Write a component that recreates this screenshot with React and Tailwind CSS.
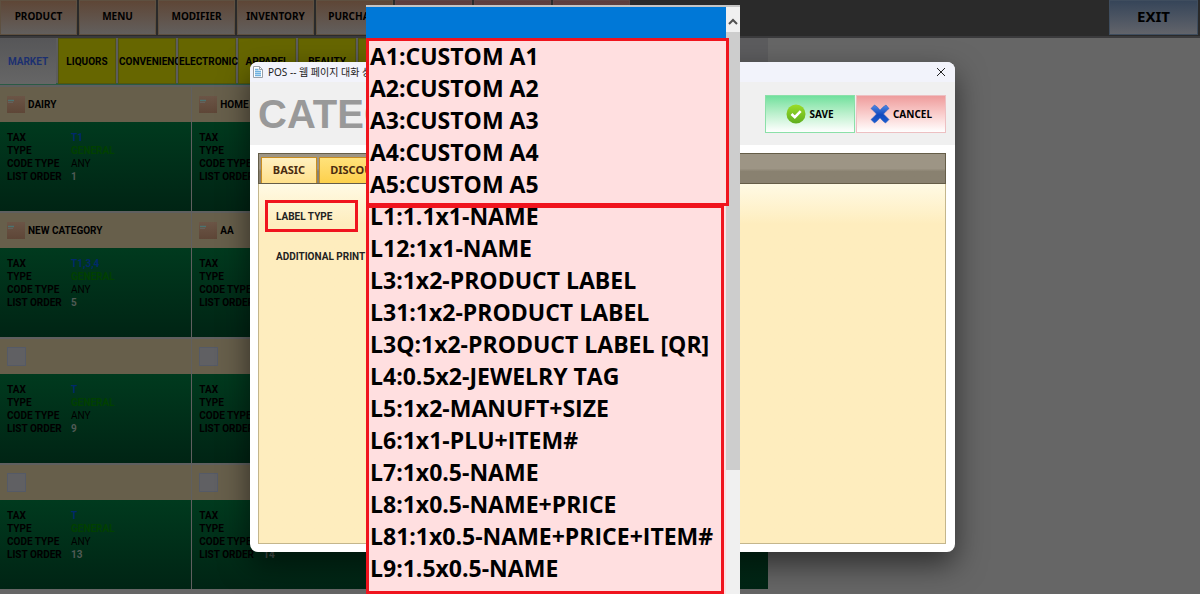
import { useState } from "react";

const MENUS = ["PRODUCT", "MENU", "MODIFIER", "INVENTORY", "PURCHASE"];
const REPORT_MENUS = ["", "", ""];
const TABS = ["LIQUORS", "CONVENIENC", "ELECTRONIC", "APPAREL", "BEAUTY", ""];

const CATEGORIES = [
  { name: "DAIRY", tax: "T1", order: 1 },
  { name: "HOME", tax: "T1", order: 2 },
  { name: "", tax: "T", order: 3 },
  { name: "", tax: "T", order: 4 },
  { name: "NEW CATEGORY", tax: "T1,3,4", order: 5 },
  { name: "AA", tax: "T1", order: 6 },
  { name: "", tax: "T", order: 7 },
  { name: "", tax: "T", order: 8 },
  { name: "", tax: "T", order: 9 },
  { name: "", tax: "T", order: 10 },
  { name: "", tax: "T", order: 11 },
  { name: "", tax: "T", order: 12 },
  { name: "", tax: "T", order: 13 },
  { name: "", tax: "T", order: 14 },
  { name: "", tax: "T", order: 15 },
  { name: "", tax: "T", order: 16 },
];

const CUSTOM_LABELS = [
  "A1:CUSTOM A1",
  "A2:CUSTOM A2",
  "A3:CUSTOM A3",
  "A4:CUSTOM A4",
  "A5:CUSTOM A5",
];

const STOCK_LABELS = [
  "L1:1.1x1-NAME",
  "L12:1x1-NAME",
  "L3:1x2-PRODUCT LABEL",
  "L31:1x2-PRODUCT LABEL",
  "L3Q:1x2-PRODUCT LABEL [QR]",
  "L4:0.5x2-JEWELRY TAG",
  "L5:1x2-MANUFT+SIZE",
  "L6:1x1-PLU+ITEM#",
  "L7:1x0.5-NAME",
  "L8:1x0.5-NAME+PRICE",
  "L81:1x0.5-NAME+PRICE+ITEM#",
  "L9:1.5x0.5-NAME",
];

function TopBar() {
  return (
    <header className="flex h-[38px] justify-between border-b-2 border-[#3a3a3c] bg-[#2a2a2a] font-['Noto_Sans',sans-serif] font-bold text-black">
      <nav className="flex gap-[2px]">
        {MENUS.map((m) => (
          <button
            key={m}
            className="h-[35px] w-[77px] border border-[#5e5040] bg-linear-to-b from-[#5e4636] to-[#625f5d] pb-[2px] text-[10px]"
          >
            {m}
          </button>
        ))}
        {REPORT_MENUS.map((m, i) => (
          <button
            key={i}
            aria-label="Report"
            className="h-[35px] w-[77px] border border-[#5e4545] bg-linear-to-b from-[#5e3c3c] to-[#625d5d]"
          >
            {m}
          </button>
        ))}
      </nav>
      <button className="mr-[2px] h-[35px] w-[89px] border border-[#3f4d5e] bg-linear-to-b from-[#364559] to-[#62646a] pb-[2px] text-[15px]">
        EXIT
      </button>
    </header>
  );
}

function CategoryTabs() {
  return (
    <nav className="flex h-[47px] gap-[2px] border-b-2 border-[#2b5a45] bg-[#5c5c5e] text-[10px] font-bold">
      <button className="h-[46px] w-14 bg-linear-to-b from-[#565658] to-[#666] text-[#1c3070]">
        MARKET
      </button>
      {TABS.map((t, i) => (
        <button
          key={i}
          aria-label={t || "More"}
          className="h-[46px] w-[58px] border border-[#54560c] bg-[#666600] text-black"
        >
          {t}
        </button>
      ))}
    </nav>
  );
}

function BoxIcon() {
  return (
    <svg width="18" height="17" viewBox="0 0 18 17">
      <defs>
        <linearGradient id="box" x1="0" y1="0" x2="0" y2="1">
          <stop offset="0" stopColor="#6b5546" />
          <stop offset="1" stopColor="#5e4637" />
        </linearGradient>
      </defs>
      <rect width="18" height="17" fill="url(#box)" />
      <path d="M1 4.500h6" stroke="#4c7370" strokeWidth="1.500" />
      <path d="M1 6.500h5" stroke="#66605a" />
    </svg>
  );
}

function CategoryCard({ category }) {
  return (
    <article>
      <div className="flex h-[35px] items-center gap-[3px] bg-[#675f4b] pl-[7px] text-[10px] font-bold text-black">
        {category.name ? (
          <BoxIcon />
        ) : (
          <span className="size-[19px] border border-[#555a66] bg-[#606063]" />
        )}
        {category.name}
      </div>
      <dl className="grid h-[89px] auto-rows-[13px] grid-cols-[64px_1fr] bg-linear-to-b from-[#003a1e] to-[#002414] pt-[9px] pl-[7px] text-[10px] leading-[13px] whitespace-nowrap text-black">
        <dt className="font-bold">TAX</dt>
        <dd className="font-bold text-[#00296b]">{category.tax}</dd>
        <dt className="font-bold">TYPE</dt>
        <dd className="font-bold text-[#004000]">GENERAL</dd>
        <dt className="font-bold">CODE TYPE</dt>
        <dd>ANY</dd>
        <dt className="font-bold">LIST ORDER</dt>
        <dd className="font-bold text-[#505a55]">{category.order}</dd>
      </dl>
    </article>
  );
}

function DocIcon() {
  return (
    <svg width="10" height="12" viewBox="0 0 10 12">
      <path d="M.5.5h6l3 3v8h-9z" fill="#fff" stroke="#9aa0a8" />
      <path d="M6.500.5v3h3" fill="none" stroke="#9aa0a8" />
      <path d="M2 3.500h3.500M2 5.500h6M2 7.500h6M2 9.500h6" stroke="#6fb1e0" strokeWidth="1.300" />
    </svg>
  );
}

function CheckIcon() {
  return (
    <svg width="20" height="20" viewBox="0 0 20 20">
      <defs>
        <linearGradient id="ok" x1="0" y1="0" x2="0" y2="1">
          <stop offset="0" stopColor="#9bdc28" />
          <stop offset="1" stopColor="#5fae1e" />
        </linearGradient>
      </defs>
      <circle cx="10" cy="10" r="9.500" fill="url(#ok)" />
      <path d="M5.500 10l3.300 3.200 5.900-6" fill="none" stroke="#fff" strokeWidth="2.600" />
    </svg>
  );
}

function CrossIcon() {
  return (
    <svg width="20" height="20" viewBox="0 0 20 20">
      <defs>
        <linearGradient id="no" x1="0" y1="0" x2="0" y2="1">
          <stop offset="0" stopColor="#4f8ae6" />
          <stop offset=".55" stopColor="#1248bd" />
          <stop offset="1" stopColor="#1c5ed0" />
        </linearGradient>
      </defs>
      <path
        d="M1 4.500L4.500 1Q8 3 10 6.200 12.500 3 16 1L19 4.500Q16 7 13.500 10 16.500 13 19 15.500L15.500 19Q12.500 17 10 13.800 7.500 17 4.500 19L1 15.500Q4 13 6.500 10 4 7 1 4.500z"
        fill="url(#no)"
        stroke="#2a5fc4"
        strokeWidth=".6"
      />
    </svg>
  );
}

function LabelTypeList({ value, onChange }) {
  return (
    <div className="absolute top-[5px] left-[366px] flex w-[374px] border-t-2 border-[#c4c4c4] bg-[#ffdfe0]">
      <select
        id="label-type"
        size={18}
        value={value}
        onChange={(e) => onChange(e.target.value)}
        className="h-[587px] flex-1 appearance-none overflow-hidden bg-[#ffdfe0] font-['Open_Sans',sans-serif] text-[23px] text-black outline-none"
      >
        <option value="none" className="block h-[33px] bg-[#0078d7] p-0" />
        {[...CUSTOM_LABELS, ...STOCK_LABELS].map((l) => (
          <option key={l} value={l} className="block h-8 min-h-8 py-0 pr-0 pl-1 leading-8 font-bold">
            {l}
          </option>
        ))}
      </select>
      <div className="flex w-[14px] flex-col bg-[#f0f0f0]">
        <button aria-label="Scroll up" className="flex h-[25px] items-center justify-center pt-1">
          <svg width="10" height="7" viewBox="0 0 10 7">
            <path d="M1 6l4-4 4 4" fill="none" stroke="#505050" strokeWidth="2" />
          </svg>
        </button>
        <div className="h-[438px] bg-[#cdcdcd]" />
      </div>
      {/* group outlines */}
      <div className="pointer-events-none absolute top-[31px] left-0 h-[168px] w-[363px] border-3 border-[#f0141e]" />
      <div className="pointer-events-none absolute top-[198px] left-0 h-[389px] w-[358px] border-3 border-[#f0141e]" />
    </div>
  );
}

function CategoryDialog() {
  return (
    <div
      role="dialog"
      aria-label="Category"
      className="absolute top-[62px] left-[250px] flex h-[490px] w-[705px] flex-col overflow-hidden rounded-lg bg-white shadow-[0_12px_30px_rgba(0,0,0,0.55)]"
    >
      <div className="flex h-5 items-center justify-between bg-[#f2f3fb] pr-[9px] pl-[3px]">
        <div className="flex items-center gap-[5px] font-['Noto_Sans','Noto_Sans_CJK_KR',sans-serif] text-[10px] text-[#222]">
          <DocIcon />
          POS -- 웹 페이지 대화 상자
        </div>
        <button aria-label="Close">
          <svg width="10" height="10" viewBox="0 0 10 10">
            <path d="M1 1l8 8M9 1l-8 8" stroke="#222" />
          </svg>
        </button>
      </div>
      <div className="flex h-[63px] items-center justify-between bg-[#f0f0f0] pt-px pr-[9px] pl-2">
        <h1 className="font-['Liberation_Sans',sans-serif] text-[40px] leading-none font-bold text-[#999]">CATEGORY</h1>
        <div className="flex gap-px font-['Noto_Sans',sans-serif] text-[10px] font-bold text-black">
          <button className="flex h-[38px] w-[90px] items-center justify-center gap-[3px] border border-[#8be0a8] bg-linear-to-b from-[#6fe09d] to-white">
            <CheckIcon />
            SAVE
          </button>
          <button className="flex h-[38px] w-[90px] items-center justify-center gap-[3px] border border-[#edc0c2] bg-linear-to-b from-[#ee9c9c] to-white">
            <CrossIcon />
            CANCEL
          </button>
        </div>
      </div>
      <div className="m-2 mr-[9px] flex flex-1 flex-col">
        <div
          role="tablist"
          className="flex h-[31px] items-end gap-[2px] border border-[#655d48] bg-linear-to-b from-[#9d9585] from-50% to-[#898170] to-60% pl-[2px] font-['Noto_Sans',sans-serif] text-[11px] font-bold text-[#4a2c10]"
        >
          <button role="tab" className="h-[26px] w-[56px] border border-b-0 border-[#c98d20] bg-linear-to-b from-[#fff0c0] to-[#ffe08a]">
            BASIC
          </button>
          <button role="tab" className="h-[26px] w-20 border border-b-0 border-[#c98d20] bg-linear-to-b from-[#ffe27a] to-[#fdd04a]">
            DISCOUNT
          </button>
        </div>
        <div className="flex-1 border border-t-0 border-[#c4b68c] bg-linear-to-b from-[#fffae4] to-[#feedbe] to-[40px] px-[6px] pt-4 text-[10px] font-bold text-[#222]">
          <label
            htmlFor="label-type"
            className="flex h-8 w-[93px] items-center border-3 border-[#f0141e] pl-2"
          >
            LABEL TYPE
          </label>
          <p className="mt-[9px] pl-[11px] leading-8 whitespace-nowrap">ADDITIONAL PRINT</p>
        </div>
      </div>
    </div>
  );
}

export default function App() {
  const [labelType, setLabelType] = useState("");

  return (
    <div className="relative min-h-screen overflow-hidden bg-[#666] font-[Roboto,sans-serif]">
      <TopBar />
      <main className="w-[768px] bg-[#5f5f5f]">
        <CategoryTabs />
        <section className="mt-[2px] grid grid-cols-4 gap-x-px gap-y-[2px]">
          {CATEGORIES.map((c) => (
            <CategoryCard key={c.order} category={c} />
          ))}
        </section>
      </main>
      <CategoryDialog />
      <LabelTypeList value={labelType} onChange={setLabelType} />
    </div>
  );
}
